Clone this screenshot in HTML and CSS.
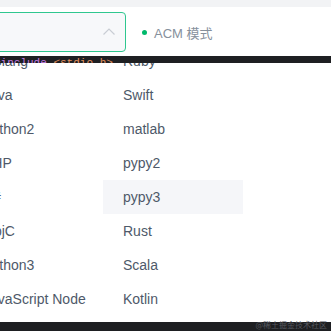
FILE: index.html
```html
<!DOCTYPE html>
<html lang="zh-CN">
<head>
  <meta charset="UTF-8">
  <meta name="viewport" content="width=device-width, initial-scale=1.0">
  <title>语言选择</title>
  <link rel="stylesheet" href="styles.css">
</head>
<body>
  <div class="topstrip"></div>

  <div class="header">
    <div class="select">
      <svg class="arrow" width="12" height="7" viewBox="0 0 12 7">
        <polyline points="0.5,6.5 6,1 11.5,6.5" fill="none" stroke="#c9cdd4" stroke-width="1.2"/>
      </svg>
    </div>
    <div class="mode">
      <span class="dot"></span>
      <span class="mode-text">ACM 模式</span>
    </div>
  </div>

  <div class="editor">
    <div class="code-line"><span class="kw">#include</span> <span class="str">&lt;stdio.h&gt;</span></div>

    <!-- 下拉语言列表 -->
    <div class="dropdown">
      <div class="options">
        <div class="opt">Golang</div>
        <div class="opt">Ruby</div>
        <div class="opt">Java</div>
        <div class="opt">Swift</div>
        <div class="opt">Python2</div>
        <div class="opt">matlab</div>
        <div class="opt">PHP</div>
        <div class="opt">pypy2</div>
        <div class="opt">C#</div>
        <div class="opt hover">pypy3</div>
        <div class="opt">ObjC</div>
        <div class="opt">Rust</div>
        <div class="opt">Python3</div>
        <div class="opt">Scala</div>
        <div class="opt">JavaScript Node</div>
        <div class="opt">Kotlin</div>
      </div>
    </div>

    <div class="watermark">@稀土掘金技术社区</div>
  </div>
</body>
</html>
```

FILE: styles.css
```css
* {
  margin: 0;
  padding: 0;
  box-sizing: border-box;
}

html, body {
  width: 331px;
  height: 331px;
  overflow: hidden;
}

body {
  font-family: "Liberation Sans", Arial, "Noto Sans CJK SC", sans-serif;
  background: #ffffff;
}

.topstrip {
  height: 7px;
  background: #f2f3f5;
}

.header {
  height: 49px;
  padding-top: 5px;
  display: flex;
  align-items: flex-start;
  background: #ffffff;
}

.select {
  width: 200px;
  height: 40px;
  margin-left: -74px;
  background: #f7f8fa;
  border: 1px solid #2fc78f;
  border-radius: 4px;
  display: flex;
  justify-content: flex-end;
  align-items: center;
  padding-right: 10px;
}

.arrow {
  display: block;
  margin-top: -1px;
}

.mode {
  display: flex;
  align-items: center;
  height: 40px;
  margin-left: 16px;
}

.dot {
  width: 5px;
  height: 5px;
  border-radius: 50%;
  background: #00b96b;
  margin-right: 7px;
  margin-top: 1px;
}

.mode-text {
  font-size: 13px;
  color: #86909c;
  font-family: "Liberation Sans", Arial, "Noto Sans CJK SC", sans-serif;
}

.editor {
  position: relative;
  height: 275px;
  background: #1e1f22;
}

.code-line {
  font-family: "Liberation Mono", "DejaVu Sans Mono", monospace;
  font-size: 11px;
  line-height: 14px;
  margin-left: -6px;
  white-space: nowrap;
}

.kw {
  color: #c47ce0;
}

.str {
  color: #e2915f;
}

.dropdown {
  position: absolute;
  top: 7px;
  left: -37px;
  right: 0;
  height: 259px;
  background: #ffffff;
  overflow: hidden;
}

.options {
  display: grid;
  grid-template-columns: 140px 140px;
  grid-auto-rows: 34px;
  margin-top: -19px;
}

.opt {
  padding-left: 20px;
  font-size: 14px;
  line-height: 34px;
  color: #4e5969;
  white-space: nowrap;
}

.opt.hover {
  background: #f5f6f9;
}

.watermark {
  position: absolute;
  right: 4px;
  bottom: 2px;
  font-size: 8px;
  line-height: 9px;
  color: #55585f;
  font-family: "Noto Sans CJK SC", sans-serif;
}
```
